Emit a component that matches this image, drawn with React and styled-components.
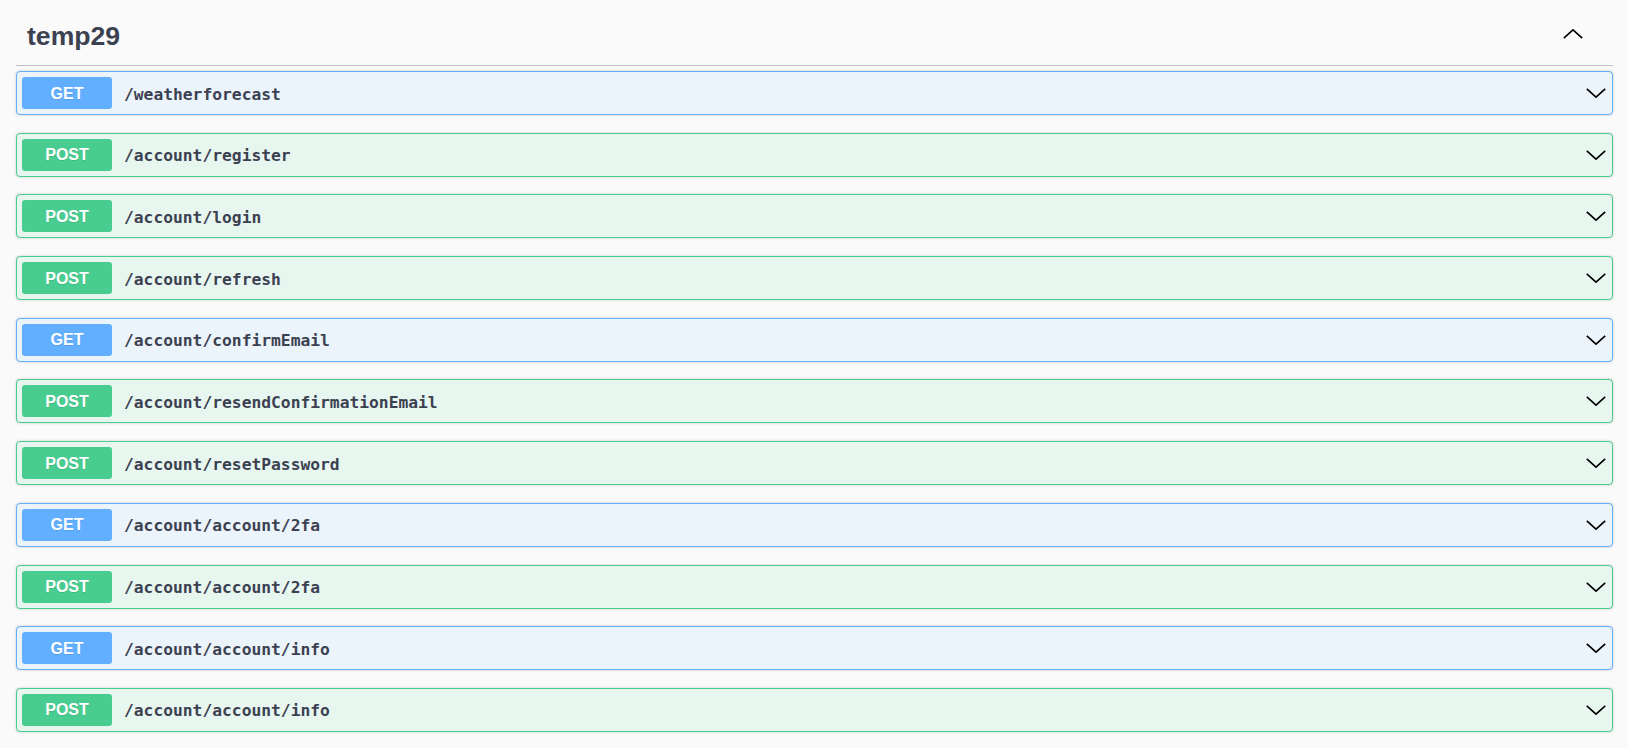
import React from 'react';
import styled, { createGlobalStyle } from 'styled-components';

const GlobalStyle = createGlobalStyle`
  html, body {
    margin: 0;
    padding: 0;
    background: #fafafa;
  }
  body {
    font-family: "Liberation Sans", Arial, sans-serif;
    color: #3b4151;
  }
`;

const methods = {
  get: { bg: '#ebf3fb', color: '#61affe' },
  post: { bg: '#e8f6f0', color: '#49cc90' },
};

const endpoints = [
  ['get', '/weatherforecast'],
  ['post', '/account/register'],
  ['post', '/account/login'],
  ['post', '/account/refresh'],
  ['get', '/account/confirmEmail'],
  ['post', '/account/resendConfirmationEmail'],
  ['post', '/account/resetPassword'],
  ['get', '/account/account/2fa'],
  ['post', '/account/account/2fa'],
  ['get', '/account/account/info'],
  ['post', '/account/account/info'],
];

const Wrapper = styled.div`
  padding: 0 15px 0 16px;
`;

const TagHeader = styled.div`
  display: flex;
  align-items: center;
  justify-content: space-between;
  padding: 21px 0 14px;
  border-bottom: 1px solid rgba(59, 65, 81, 0.3);
  margin-bottom: 5px;
`;

const TagTitle = styled.h3`
  margin: 0 0 0 11px;
  font-size: 26.6px;
  line-height: 30px;
  font-weight: 700;
  color: #3b4151;
`;

const ToggleButton = styled.button`
  display: flex;
  align-items: center;
  border: none;
  background: none;
  padding: 0;
  margin: 0 30px 4px 0;
  cursor: pointer;
`;

const Operation = styled.div`
  display: flex;
  align-items: center;
  box-sizing: border-box;
  height: 44px;
  padding: 5px 6px 5px 5px;
  margin-bottom: 17.7px;
  border: 1px solid ${(p) => methods[p.$method].color};
  border-radius: 4px;
  background: ${(p) => methods[p.$method].bg};
  box-shadow: 0 0 3px rgba(0, 0, 0, 0.19);
  cursor: pointer;
`;

const Method = styled.span`
  display: flex;
  align-items: center;
  justify-content: center;
  box-sizing: border-box;
  width: 90px;
  height: 32px;
  padding-top: 1px;
  border-radius: 3px;
  background: ${(p) => methods[p.$method].color};
  color: #fff;
  font-size: 16px;
  font-weight: 700;
  text-shadow: 0 1px 0 rgba(0, 0, 0, 0.1);
  text-transform: uppercase;
`;

const Path = styled.span`
  flex: 1;
  padding: 2px 12px 0;
  font-family: "DejaVu Sans Mono", "Liberation Mono", monospace;
  font-size: 16.3px;
  font-weight: 700;
  color: #3b4151;
`;

const Chevron = ({ up }) => (
  <svg width="20" height="10" viewBox="0 0 20 10">
    <polyline
      points={up ? '0.8,9.2 10,0.8 19.2,9.2' : '0.8,0.8 10,9.2 19.2,0.8'}
      fill="none"
      stroke="#000"
      strokeWidth="1.6"
    />
  </svg>
);

export default function App() {
  return (
    <Wrapper>
      <GlobalStyle />
      <TagHeader>
        <TagTitle>temp29</TagTitle>
        <ToggleButton>
          <Chevron up />
        </ToggleButton>
      </TagHeader>
      {endpoints.map(([method, path]) => (
        <Operation key={method + path} $method={method}>
          <Method $method={method}>{method}</Method>
          <Path>{path}</Path>
          <Chevron />
        </Operation>
      ))}
    </Wrapper>
  );
}
